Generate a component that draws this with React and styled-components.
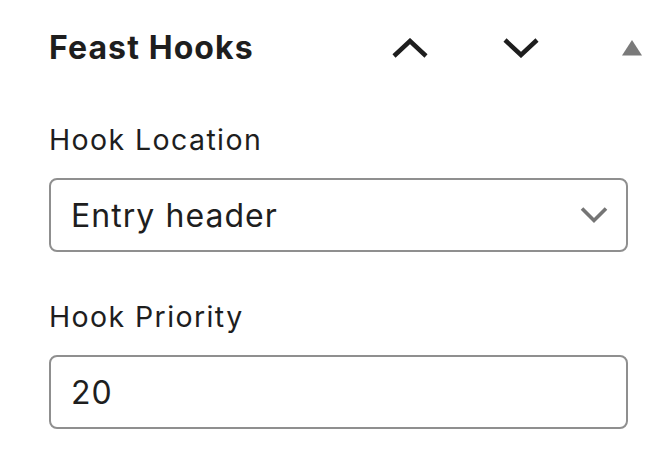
import React from "react";
import styled, { createGlobalStyle } from "styled-components";

const GlobalStyle = createGlobalStyle`
  html, body {
    margin: 0;
    padding: 0;
    background: #fff;
  }
  body {
    font-family: Inter, "Noto Sans", sans-serif;
    color: #1e1e1e;
  }
`;

const Panel = styled.section`
  width: 664px;
  padding: 0 36px 0 49px;
  box-sizing: border-box;
`;

const Header = styled.div`
  height: 96px;
  display: flex;
  align-items: center;
  margin-right: -36px;
`;

const Title = styled.h2`
  margin: 0;
  font-size: 32px;
  font-weight: 700;
  line-height: 40px;
  letter-spacing: 1.1px;
  color: #1e1e1e;
`;

const Actions = styled.div`
  margin-left: auto;
  display: flex;
  align-items: center;
  gap: 47px;
  padding-left: 2px;
`;

const IconButton = styled.button`
  width: 64px;
  height: 64px;
  padding: 0;
  border: 0;
  background: none;
  display: flex;
  align-items: center;
  justify-content: center;
  cursor: pointer;
`;

const Field = styled.div`
  display: flex;
  flex-direction: column;
  margin-top: ${(p) => p.$top}px;
`;

const Label = styled.label`
  font-size: 28.5px;
  line-height: 36px;
  letter-spacing: 1.4px;
  margin-bottom: 20px;
  color: #1e1e1e;
`;

const SelectWrap = styled.div`
  position: relative;
`;

const controlBase = `
  width: 100%;
  height: 74px;
  box-sizing: border-box;
  border: 2px solid #8f8f8f;
  border-radius: 8px;
  background: #fff;
  font-family: Inter, "Noto Sans", sans-serif;
  font-size: 32px;
  letter-spacing: 1.05px;
  color: #1e1e1e;
  padding: 0 20px;
  outline: none;
`;

const Select = styled.select`
  ${controlBase}
  appearance: none;
  -webkit-appearance: none;
`;

const Chevron = styled.svg`
  position: absolute;
  right: 20px;
  top: 50%;
  transform: translateY(-50%);
  pointer-events: none;
`;

const Input = styled.input`
  ${controlBase}
`;

const ChevronUp = () => (
  <svg width="36" height="20" viewBox="0 0 36 20">
    <polyline points="2,18 18,3 34,18" fill="none" stroke="#1e1e1e" strokeWidth="4.5" />
  </svg>
);

const ChevronDown = () => (
  <svg width="36" height="20" viewBox="0 0 36 20">
    <polyline points="2,2 18,17 34,2" fill="none" stroke="#1e1e1e" strokeWidth="4.5" />
  </svg>
);

const Triangle = () => (
  <svg width="20" height="16" viewBox="0 0 20 16">
    <polygon points="10,0 20,15.5 0,15.5" fill="#7a7a7a" />
  </svg>
);

export default function App() {
  return (
    <>
      <GlobalStyle />
      <Panel>
        <Header>
          <Title>Feast Hooks</Title>
          <Actions>
            <IconButton aria-label="Move up">
              <ChevronUp />
            </IconButton>
            <IconButton aria-label="Move down">
              <ChevronDown />
            </IconButton>
            <IconButton aria-label="Toggle panel">
              <Triangle />
            </IconButton>
          </Actions>
        </Header>

        <Field $top={26}>
          <Label>Hook Location</Label>
          <SelectWrap>
            <Select defaultValue="entry_header">
              <option value="entry_header">Entry header</option>
              <option value="entry_footer">Entry footer</option>
            </Select>
            <Chevron width="28" height="17" viewBox="0 0 28 17">
              <polyline points="2,2 14,14 26,2" fill="none" stroke="#757575" strokeWidth="3.6" />
            </Chevron>
          </SelectWrap>
        </Field>

        <Field $top={47}>
          <Label>Hook Priority</Label>
          <Input type="number" defaultValue={20} />
        </Field>
      </Panel>
    </>
  );
}
